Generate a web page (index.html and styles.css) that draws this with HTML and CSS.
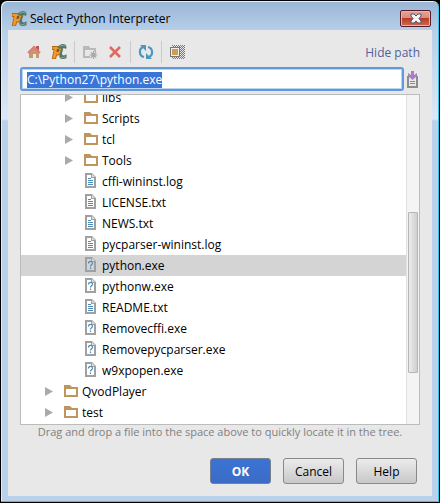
FILE: index.html
```html
<!DOCTYPE html>
<html lang="en">
<head>
<meta charset="utf-8">
<title>Select Python Interpreter</title>
<link rel="stylesheet" href="styles.css">
</head>
<body>
<svg class="defs" aria-hidden="true">
  <symbol id="pycharm" viewBox="0 0 16 16">
    <path d="M1 2h8c4 1 3.500 9-2 9.500H6l-1 3.500H.800L2.500 6H1z" fill="#b8640f"/>
    <path d="M1.500 3H8c3.200 0 3 7.500-1.500 7.500H5.200l-1 4H1.800L3.500 5h-2z" fill="#f09a28"/>
    <path d="M6 5h1.800c1 0 .700 3-1 3H5.400z" fill="#75553a"/>
    <path d="M6.500 4C7.500 1 9.500 0 12 0c2 0 3.500 1 3.500 3.500L15 5c-1.500-1-3-1-4-.800-1 .800-3 .800-4.500-.200z" fill="#547868"/>
    <path d="M11 4l1.500.500C11 7 10.500 9.500 11.500 11c1.200.800 2.800.300 4-1V14c-2 1.500-5.500 1.500-7-.500C8 11 9.500 6 11 4z" fill="#547868"/>
    <path d="M8.500 2.500C10 1 12.500 1 14 2M9.500 13.200c1.500 1 3 .500 4.500-.500" fill="none" stroke="#8dac9b" stroke-width="1"/>
  </symbol>
  <symbol id="folder" viewBox="0 0 14 12">
    <path d="M0 0h6l2 2h6v10H0zM2 4v6h10V4z" fill="#bf945f" fill-rule="evenodd"/>
  </symbol>
  <symbol id="text-file" viewBox="0 0 11 15">
    <path d="M0 0h7l4 4v11H0zM2 2v11h7V5H6V2z" fill="#a0a0a0" fill-rule="evenodd"/>
    <path d="M7 1l3 3H7z" fill="#dcdcdc"/>
    <path d="M3 5h3v1H3zM3 7h5v1H3zM3 9h5v1H3zM3 11h5v1H3z" fill="#4b8dba"/>
  </symbol>
  <symbol id="unknown-file" viewBox="0 0 11 15">
    <path d="M0 0h7l4 4v11H0zM2 2v11h7V5H6V2z" fill="#a0a0a0" fill-rule="evenodd"/>
    <path d="M7 1l3 3H7z" fill="#dcdcdc"/>
    <path d="M3.500 6.500C3.500 3.800 7.500 3.800 7.500 6.300C7.500 7.800 5.500 7.800 5.500 9.500M5.500 10.500V12" fill="none" stroke="#4b8dba" stroke-width="1.200"/>
  </symbol>
</svg>
<main class="window">
  <header class="titlebar">
    <svg class="app-icon"><use href="#pycharm"/></svg>
    <h1 class="title">Select Python Interpreter</h1>
    <button class="close" aria-label="Close">
      <svg viewBox="0 0 14 11"><path d="M2 1h3l2 2 2-2h3v2L10 5.500 12 8v2H9L7 8l-2 2H2V8l2-2.500L2 3z" fill="#f4f4f6" stroke="#4f5870"/></svg>
    </button>
  </header>
  <div class="content">
    <div class="toolbar">
      <button class="tool" aria-label="Home"><svg viewBox="0 0 16 16"><path d="M3 8l5-5 5 5v6h-3v-4H7v4H3z" fill="#c49a6c"/><path d="M10 2h3v5h-3z" fill="#a75e58"/><path d="M2 9l6-6 6 6" fill="none" stroke="#e57878" stroke-width="2.200"/></svg></button>
      <button class="tool" aria-label="Project directory"><svg><use href="#pycharm"/></svg></button>
      <span class="separator"></span>
      <button class="tool" aria-label="New folder"><svg viewBox="0 0 16 16"><path d="M1 2h6l1 2h6v4h-2V6H3v6h5v2H1z" fill="#b9b9b9"/><path d="M11.500 7v8M7.500 11h8M8.700 8.200l5.600 5.600M14.300 8.200l-5.600 5.600" stroke="#acacac" stroke-width="1.200"/><circle cx="11.500" cy="11" r="2.200" fill="#a8a8a8"/></svg></button>
      <button class="tool" aria-label="Delete"><svg viewBox="0 0 16 16"><path d="M3 3l10 10M13 3L3 13" stroke="#df6b5e" stroke-width="2.600"/></svg></button>
      <span class="separator"></span>
      <button class="tool" aria-label="Refresh"><svg viewBox="0 0 16 16"><path d="M6 13C1 12 .500 5 5 3M10 3c5 1 5.500 8 1 10" fill="none" stroke="#4d96c4" stroke-width="2.200"/><path d="M2 1h6v6zM14 15H8V9z" fill="#4d96c4"/></svg></button>
      <span class="separator"></span>
      <button class="tool" aria-label="Show hidden files"><svg viewBox="0 0 16 16"><defs><pattern id="checks" width="2" height="2" patternUnits="userSpaceOnUse"><path d="M0 0h1v1H0zM1 1h1v1H1z" fill="#777"/></pattern></defs><path d="M3 1h13v14H3z" fill="url(#checks)"/><path d="M1 3h10v10H1z" fill="#777"/><path d="M2 4h8v8H2z" fill="#eee"/><path d="M3 5h6v6H3z" fill="#cf9b55"/></svg></button>
      <a class="hide-path" href="#">Hide path</a>
    </div>
    <div class="path-row">
      <label class="path-box"><input class="path" type="text" value="C:\Python27\python.exe" aria-label="Path" autofocus></label>
      <button class="history" aria-label="Path history"><svg viewBox="0 0 12 17"><path d="M1 5h2v10h7V5h2v12H1z" fill="#8c8c8c"/><path d="M4 10h5v1H4zM4 12h5v1H4z" fill="#8c8c8c"/><path d="M5 0h3v4l3-2v3L6.500 9 2 5V2l3 2z" fill="#aa7fc0"/></svg></button>
    </div>
    <div class="tree">
      <ul class="rows" role="tree">
        <li class="row deep" role="treeitem"><i class="arrow"></i><svg class="folder"><use href="#folder"/></svg>libs</li>
        <li class="row deep" role="treeitem"><i class="arrow"></i><svg class="folder"><use href="#folder"/></svg>Scripts</li>
        <li class="row deep" role="treeitem"><i class="arrow"></i><svg class="folder"><use href="#folder"/></svg>tcl</li>
        <li class="row deep" role="treeitem"><i class="arrow"></i><svg class="folder"><use href="#folder"/></svg>Tools</li>
        <li class="row leaf" role="treeitem"><svg class="file"><use href="#text-file"/></svg>cffi-wininst.log</li>
        <li class="row leaf" role="treeitem"><svg class="file"><use href="#text-file"/></svg>LICENSE.txt</li>
        <li class="row leaf" role="treeitem"><svg class="file"><use href="#text-file"/></svg>NEWS.txt</li>
        <li class="row leaf" role="treeitem"><svg class="file"><use href="#text-file"/></svg>pycparser-wininst.log</li>
        <li class="row leaf selected" role="treeitem" aria-selected="true"><svg class="file"><use href="#unknown-file"/></svg>python.exe</li>
        <li class="row leaf" role="treeitem"><svg class="file"><use href="#unknown-file"/></svg>pythonw.exe</li>
        <li class="row leaf" role="treeitem"><svg class="file"><use href="#text-file"/></svg>README.txt</li>
        <li class="row leaf" role="treeitem"><svg class="file"><use href="#unknown-file"/></svg>Removecffi.exe</li>
        <li class="row leaf" role="treeitem"><svg class="file"><use href="#unknown-file"/></svg>Removepycparser.exe</li>
        <li class="row leaf" role="treeitem"><svg class="file"><use href="#unknown-file"/></svg>w9xpopen.exe</li>
        <li class="row" role="treeitem"><i class="arrow"></i><svg class="folder"><use href="#folder"/></svg>QvodPlayer</li>
        <li class="row" role="treeitem"><i class="arrow"></i><svg class="folder"><use href="#folder"/></svg>test</li>
      </ul>
      <div class="scrollbar"><div class="thumb"></div></div>
    </div>
    <p class="hint">Drag and drop a file into the space above to quickly locate it in the tree.</p>
    <footer class="actions">
      <button class="button primary">OK</button>
      <button class="button">Cancel</button>
      <button class="button">Help</button>
    </footer>
  </div>
</main>
<script src="script.js"></script>
</body>
</html>
```
FILE: styles.css
```css
* { box-sizing: border-box; }
body {
  margin: 0;
  background: #000;
  color: #000;
  font: 12px/21px "Open Sans", "Noto Sans", sans-serif;
}
button { margin: 0; padding: 0; border: 0; background: none; font: inherit; color: inherit; }
svg { display: block; flex: none; }
.defs { position: absolute; width: 0; height: 0; }
.window {
  display: flex;
  flex-direction: column;
  height: 100vh;
  padding: 0 6px 6px;
  border: 1px solid #000;
  border-radius: 7px 7px 0 0;
  background: linear-gradient(#9ab5d5, #b7cfe9 30px, #dbe8f6 118px, #b9d1ea 120px);
  box-shadow: inset -1px -1px #35c5e8, inset 1px 1px #e4eef8;
}
.titlebar { display: flex; align-items: center; height: 29px; flex: none; padding: 6px 2px 0 4px; }
.app-icon { width: 16px; height: 16px; }
.title { flex: 1; margin: 0 0 0 3px; font-size: 12px; line-height: 20px; font-weight: 400; }
.close {
  display: grid;
  place-items: center;
  width: 31px;
  height: 17px;
  border: 1px solid #551f2a;
  border-radius: 2px;
  background: linear-gradient(#e3a294, #d98a7c 48%, #b93c25 50%, #cf6b50);
  box-shadow: inset 0 0 0 1px #e9b3a8;
}
.close svg { width: 14px; height: 11px; }
.content {
  display: flex;
  flex: 1;
  flex-direction: column;
  min-height: 0;
  margin: 0 1px;
  padding: 0 12px 12px;
  background: #e8e8e8;
}
.toolbar { display: flex; align-items: center; height: 37px; flex: none; padding: 7px 0 0 1px; }
.tool { display: grid; place-items: center; width: 25px; height: 25px; }
.tool svg { width: 16px; height: 16px; }
.separator { width: 6px; height: 22px; background: linear-gradient(#c9c9c9, #c9c9c9) center / 1px 100% no-repeat; }
.hide-path { margin-left: auto; color: #535f9f; text-decoration: none; }
.path-row { display: flex; align-items: center; gap: 2px; flex: none; height: 24px; }
.path-box {
  display: flex;
  flex: 1;
  height: 24px;
  padding: 3px 5px 1px;
  border: 2px solid #6099dc;
  border-radius: 3px;
  background: #fff;
  box-shadow: inset 0 0 0 1px #bcd5f3;
}
.path { width: 100%; padding: 0; border: 0; outline: 0; background: none; font-size: 12px; line-height: 16px; font-family: inherit; }
.path::selection { background: #3875d7; color: #fff; }
.history { width: 14px; height: 18px; }
.history svg { width: 12px; height: 17px; }
.tree { display: flex; flex: 1; min-height: 0; margin-top: 3px; border: 1px solid #bcbcbc; background: #fff; overflow: hidden; }
.rows { flex: 1; margin: -8px 0 0; padding: 0; list-style: none; }
.row { display: flex; align-items: center; height: 21px; padding-left: 24px; }
.row.deep { padding-left: 44px; }
.row.leaf { padding-left: 64px; }
.selected { background: #d4d4d4; }
.arrow { width: 8px; height: 9px; margin-right: 11px; background: #aaa; clip-path: polygon(0 0, 100% 50%, 0 100%); }
.folder { width: 14px; height: 12px; margin: 0 4px 1px 0; }
.file { width: 11px; height: 15px; margin: 0 6px 2px 0; }
.scrollbar { display: grid; grid-template-rows: 117fr 160fr 51fr; width: 13px; padding: 0 1px; border-left: 1px solid #e2e2e2; background: #f4f4f4; }
.thumb { grid-row: 2; border: 1px solid #b5b5b5; border-radius: 1px; background: linear-gradient(90deg, #ececec, #cfcfcf); }
.hint { flex: none; margin: 0; font-size: 11px; line-height: 13px; color: #808080; text-align: center; }
.actions { display: flex; flex: none; justify-content: flex-end; gap: 12px; padding: 20px 3px 0 0; }
.button { width: 61px; height: 26px; border: 1px solid #8a8a8a; border-radius: 3px; background: linear-gradient(#ececec, #c8c8c8); }
.primary { border-color: #76808f; background: linear-gradient(#3b74d4, #3b6bc6); color: #fff; font-weight: 700; }
```
FILE: script.js
```js
document.querySelector(".path").select();
```
